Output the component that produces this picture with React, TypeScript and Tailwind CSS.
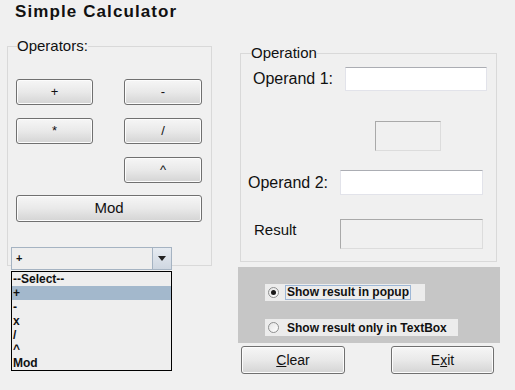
import React from 'react';

const btn =
  'flex items-center justify-center rounded-[3px] border border-[#707070] bg-linear-to-b from-[#f6f6f6] via-[#e9e9e9] to-[#d4d4d4] text-[#111] shadow-[inset_0_0_0_1px_#fcfcfc]';

const textBox = 'bg-white border border-[#e2e3ea] border-t-[#abadb3]';
const sunkenBox = 'bg-[#f0f0f0] border border-[#dcdcdc] border-t-[#a9a9a9] border-l-[#a9a9a9]';

const Radio = ({ checked }: { checked?: boolean }) => (
  <div className="flex h-[11px] w-[11px] items-center justify-center rounded-full border border-[#8e8f8f] bg-linear-to-br from-[#e3e3e3] to-[#ffffff]">
    {checked && <div className="h-[5px] w-[5px] rounded-full bg-[#1a1a1a]" />}
  </div>
);

const ops = ['--Select--', '+', '-', 'x', '/', '^', 'Mod'];

export default function App() {
  return (
    <div
      className="relative h-[390px] w-[515px] overflow-hidden bg-[#f0f0f0] text-[#111]"
      style={{ fontFamily: '"Liberation Sans", Arial, sans-serif' }}
    >
      <h1 className="pl-[15px] pt-[1px] text-[17px] font-bold leading-[21px] tracking-[1.1px]">Simple Calculator</h1>

      <div className="mt-[16px] flex">
        {/* left column */}
        <div className="relative ml-[7px] w-[205px]">
          <fieldset className="border border-[#d9d9d9] pb-[43px] pl-[8px] pr-[9px]">
            <legend className="ml-[1px] text-[15px] leading-[16px]">Operators:</legend>
            <div className="mt-[25px] grid grid-cols-[77px_78px] justify-between gap-y-[13px] text-[13px]">
              <button className={`${btn} h-[26px]`}>+</button>
              <button className={`${btn} h-[26px]`}>-</button>
              <button className={`${btn} h-[26px]`}>*</button>
              <button className={`${btn} h-[26px]`}>/</button>
              <div />
              <button className={`${btn} h-[26px]`}>^</button>
            </div>
            <button className={`${btn} mt-[12px] h-[27px] w-full text-[15px]`}>Mod</button>
          </fieldset>

          {/* combo */}
          <div className="relative ml-[4px] mt-[-19px] w-[161px]">
            <div className="flex h-[23px] border border-[#a5b3c2] bg-[#eeeeee]">
              <div className="flex flex-1 items-center pl-[4px] text-[11px] font-bold">+</div>
              <div className="flex w-[19px] items-center justify-center border-l border-[#a5b3c2] bg-linear-to-b from-[#e6ebf1] to-[#cfd7e1]">
                <svg width="8" height="5" viewBox="0 0 8 5">
                  <path d="M0 0h8L4 5z" fill="#222" />
                </svg>
              </div>
            </div>
            <div className="absolute left-0 top-[24px] z-10 w-[161px] border border-black bg-[#eeeeee] text-[12px] font-bold leading-[14px]">
              {ops.map((o) => (
                <div key={o} className={`h-[14px] pl-[1px] ${o === '+' ? 'bg-[#a3b8cc]' : ''}`}>
                  {o}
                </div>
              ))}
            </div>
          </div>
        </div>

        {/* right column */}
        <div className="ml-[26px] w-[262px] pt-[6px]">
          <fieldset className="ml-[2px] w-[257px] border border-[#d9d9d9] pb-[12px]">
            <legend className="ml-[10px] text-[15px] leading-[18px]">Operation</legend>
            <div className="mt-[5px] flex h-[24px] items-center justify-between pl-[12px] pr-[9px]">
              <span className="text-[16px]">Operand 1:</span>
              <div className={`${textBox} h-[24px] w-[142px]`} />
            </div>
            <div className={`${sunkenBox} ml-[134px] mt-[30px] h-[30px] w-[66px]`} />
            <div className="mt-[19px] flex h-[25px] items-center justify-between pl-[7px] pr-[13px]">
              <span className="text-[16px]">Operand 2:</span>
              <div className={`${textBox} h-[25px] w-[143px]`} />
            </div>
            <div className="mt-[24px] flex h-[30px] items-center justify-between pl-[13px] pr-[13px]">
              <span className="mb-[7px] text-[15px]">Result</span>
              <div className={`${sunkenBox} h-[30px] w-[143px]`} />
            </div>
          </fieldset>

          <div className="mt-[5px] h-[76px] bg-[#c6c6c6] pl-[27px] pt-[17px] text-[12px] font-bold">
            <div className="flex h-[17px] w-[160px] items-center gap-[6px] bg-[#ececec] pl-[3px]">
              <Radio checked />
              <span className="border border-[#9db7d6] px-[1px] leading-[13px]">Show result in popup</span>
            </div>
            <div className="mt-[18px] flex h-[17px] w-[193px] items-center gap-[6px] bg-[#ececec] pl-[3px]">
              <Radio />
              <span className="px-[2px]">Show result only in TextBox</span>
            </div>
          </div>

          <div className="mt-[3px] flex justify-between pl-[3px] pr-[6px] text-[14px]">
            <button className={`${btn} h-[28px] w-[104px]`}>
              <span>
                <span className="underline">C</span>lear
              </span>
            </button>
            <button className={`${btn} h-[28px] w-[103px]`}>
              <span>
                E<span className="underline">x</span>it
              </span>
            </button>
          </div>
        </div>
      </div>
    </div>
  );
}
